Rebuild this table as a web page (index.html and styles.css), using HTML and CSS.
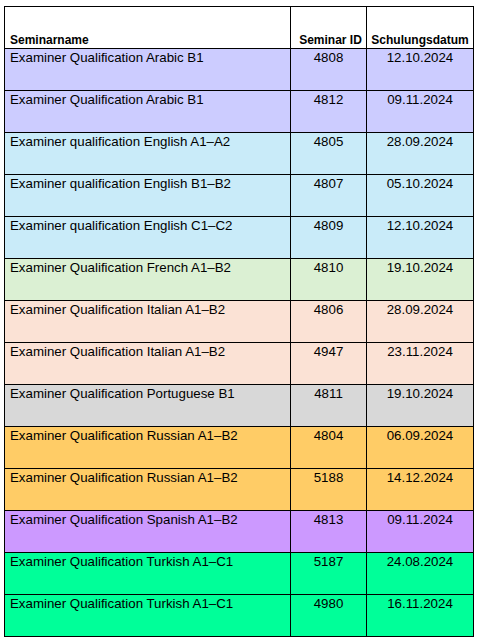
FILE: index.html
```html
<!DOCTYPE html>
<html lang="de">
<head>
<meta charset="utf-8">
<link rel="stylesheet" href="styles.css">
</head>
<body>
<table class="sheet">
  <colgroup>
    <col class="c-name">
    <col class="c-id">
    <col class="c-date">
  </colgroup>
  <thead>
    <tr class="head">
      <th class="name">Seminarname</th>
      <th class="id">Seminar ID</th>
      <th class="date">Schulungsdatum</th>
    </tr>
  </thead>
  <tbody>
    <tr class="arabic"><td class="name">Examiner Qualification Arabic B1</td><td class="id">4808</td><td class="date">12.10.2024</td></tr>
    <tr class="arabic"><td class="name">Examiner Qualification Arabic B1</td><td class="id">4812</td><td class="date">09.11.2024</td></tr>
    <tr class="english"><td class="name">Examiner qualification English A1–A2</td><td class="id">4805</td><td class="date">28.09.2024</td></tr>
    <tr class="english"><td class="name">Examiner qualification English B1–B2</td><td class="id">4807</td><td class="date">05.10.2024</td></tr>
    <tr class="english"><td class="name">Examiner qualification English C1–C2</td><td class="id">4809</td><td class="date">12.10.2024</td></tr>
    <tr class="french"><td class="name">Examiner Qualification French A1–B2</td><td class="id">4810</td><td class="date">19.10.2024</td></tr>
    <tr class="italian"><td class="name">Examiner Qualification Italian A1–B2</td><td class="id">4806</td><td class="date">28.09.2024</td></tr>
    <tr class="italian"><td class="name">Examiner Qualification Italian A1–B2</td><td class="id">4947</td><td class="date">23.11.2024</td></tr>
    <tr class="portuguese"><td class="name">Examiner Qualification Portuguese B1</td><td class="id">4811</td><td class="date">19.10.2024</td></tr>
    <tr class="russian"><td class="name">Examiner Qualification Russian A1–B2</td><td class="id">4804</td><td class="date">06.09.2024</td></tr>
    <tr class="russian"><td class="name">Examiner Qualification Russian A1–B2</td><td class="id">5188</td><td class="date">14.12.2024</td></tr>
    <tr class="spanish"><td class="name">Examiner Qualification Spanish A1–B2</td><td class="id">4813</td><td class="date">09.11.2024</td></tr>
    <tr class="turkish"><td class="name">Examiner Qualification Turkish A1–C1</td><td class="id">5187</td><td class="date">24.08.2024</td></tr>
    <tr class="turkish"><td class="name">Examiner Qualification Turkish A1–C1</td><td class="id">4980</td><td class="date">16.11.2024</td></tr>
  </tbody>
</table>
</body>
</html>
```
FILE: styles.css
```css
html, body {
  margin: 0;
  padding: 0;
  background: #ffffff;
}
body {
  padding: 6px 0 0 4px;
  font-family: "Liberation Sans", Arial, sans-serif;
  color: #000000;
}
.sheet {
  border-collapse: collapse;
  table-layout: fixed;
  width: 469px;
}
.c-name { width: 286px; }
.c-id { width: 76px; }
.c-date { width: 107px; }
.sheet th, .sheet td {
  border: 1px solid #000000;
  padding: 0;
  overflow: hidden;
  white-space: nowrap;
}
.sheet tr { height: 42px; }
.head th {
  vertical-align: bottom;
  font-size: 12px;
  line-height: 14px;
  font-weight: bold;
  padding-bottom: 1px;
}
.sheet td {
  vertical-align: top;
  font-size: 13.3px;
  line-height: 15px;
  padding-top: 1px;
}
.name { text-align: left; padding-left: 5px !important; }
.id, .date { text-align: center; }
.head .id { padding-left: 4px; }
.arabic { background: #ccccff; }
.english { background: #c9ebf9; }
.french { background: #dbf0d3; }
.italian { background: #fbe2d5; }
.portuguese { background: #d8d8d8; }
.russian { background: #ffcc66; }
.spanish { background: #cc99ff; }
.turkish { background: #00ff99; }
```
